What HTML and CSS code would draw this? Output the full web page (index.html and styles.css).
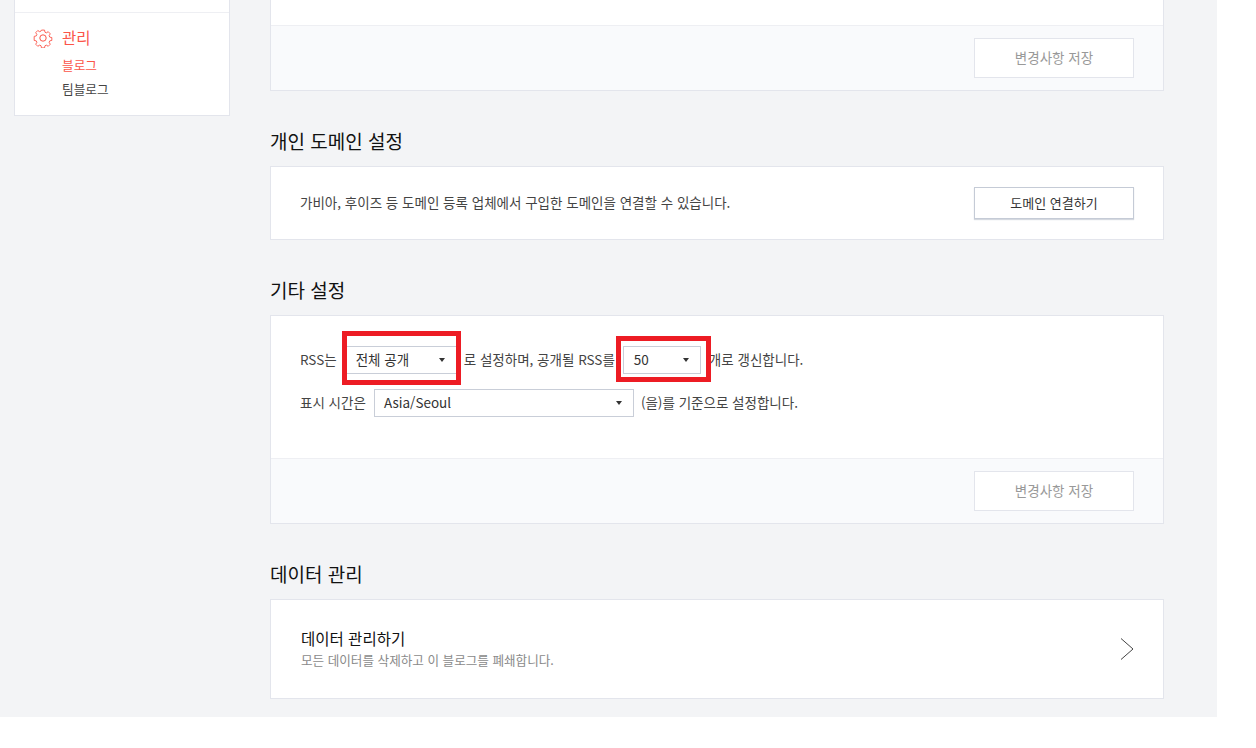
FILE: index.html
```html
<!DOCTYPE html>
<html lang="ko">
<head>
    <meta charset="UTF-8">
    <title>블로그 관리</title>
    <link rel="stylesheet" href="styles.css">
</head>
<body>
    <div class="page">
        <aside class="sidebar">
            <div class="side-top"></div>
            <div class="side-menu">
                <div class="side-title">
                    <svg class="gear" width="20" height="20" viewBox="0 0 20 20" fill="none" stroke="#fb5549" stroke-width="1">
                        <path d="M8.3 1.2h3.4l.5 2.4 1.5.7 2.1-1.3 2.3 2.4-1.3 2 .7 1.6 2.3.5v3.2l-2.3.5-.7 1.6 1.3 2.1-2.3 2.3-2.1-1.3-1.5.7-.5 2.4H8.3l-.5-2.4-1.5-.7-2.1 1.3-2.3-2.3 1.3-2.1-.7-1.6-2.3-.5V8.2l2.3-.5.7-1.6-1.3-2 2.3-2.4 2.1 1.3 1.5-.7z" transform="translate(1 1) scale(.9)" stroke-linejoin="round"/>
                        <circle cx="10" cy="10" r="3.2"/>
                    </svg>
                    <span>관리</span>
                </div>
                <a class="side-link active">블로그</a>
                <a class="side-link">팀블로그</a>
            </div>
        </aside>

        <main class="content">
            <section class="card first">
                <div class="card-body cut"></div>
                <div class="card-foot"><button class="btn off">변경사항 저장</button></div>
            </section>

            <h2>개인 도메인 설정</h2>
            <section class="card">
                <div class="domain-row">
                    <p>가비아, 후이즈 등 도메인 등록 업체에서 구입한 도메인을 연결할 수 있습니다.</p>
                    <button class="btn">도메인 연결하기</button>
                </div>
            </section>

            <h2>기타 설정</h2>
            <section class="card">
                <div class="card-body etc">
                    <div class="line">
                        <span>RSS는</span>
                        <div class="select s-open"><span>전체 공개</span><i class="caret"></i></div>
                        <span>로 설정하며, 공개될 RSS를</span>
                        <div class="select s-count"><span>50</span><i class="caret"></i></div>
                        <span>개로 갱신합니다.</span>
                        <div class="mark mark-a"></div>
                        <div class="mark mark-b"></div>
                    </div>
                    <div class="line">
                        <span>표시 시간은</span>
                        <div class="select s-zone"><span>Asia/Seoul</span><i class="caret"></i></div>
                        <span>(을)를 기준으로 설정합니다.</span>
                    </div>
                </div>
                <div class="card-foot"><button class="btn off">변경사항 저장</button></div>
            </section>

            <h2>데이터 관리</h2>
            <section class="card">
                <div class="data-row">
                    <div>
                        <strong>데이터 관리하기</strong>
                        <p>모든 데이터를 삭제하고 이 블로그를 폐쇄합니다.</p>
                    </div>
                    <svg width="16" height="24" viewBox="0 0 16 24" fill="none" stroke="#444" stroke-width="1"><path d="M2 1.5L14 12 2 22.5"/></svg>
                </div>
            </section>
        </main>
    </div>
</body>
</html>
```

FILE: styles.css
```css
* {
    box-sizing: border-box;
}
html, body {
    margin: 0;
    height: 748px;
    overflow: hidden;
    background: #fff;
}
body {
    font-family: "Noto Sans CJK KR", "Noto Sans", sans-serif;
    font-size: 13.5px;
    color: #333;
}
.page {
    width: 1217px;
    height: 717px;
    background: #f3f4f6;
    display: flex;
    align-items: flex-start;
    padding-left: 14px;
}
.sidebar {
    width: 216px;
    height: 116px;
    background: #fff;
    border: 1px solid #e3e5ec;
    border-top: 0;
}
.side-top {
    height: 13px;
    border-bottom: 1px solid #eeeff3;
}
.side-menu {
    padding: 13px 0 0 18px;
}
.side-title {
    display: flex;
    align-items: center;
    gap: 9px;
    height: 22px;
    font-size: 15.5px;
    color: #fb5549;
    margin-bottom: 5px;
}
.gear {
    margin-top: 1px;
}
.side-link {
    display: block;
    margin-left: 29px;
    height: 24px;
    line-height: 24px;
    font-size: 12.7px;
    color: #444;
}
.side-link.active {
    color: #fb5549;
}
.content {
    width: 894px;
    margin-left: 40px;
}
h2 {
    margin: 0;
    height: 75px;
    padding-top: 35px;
    font-size: 19px;
    font-weight: 400;
    line-height: 30px;
    color: #111;
}
.card {
    background: #fff;
    border: 1px solid #e3e5ec;
}
.card.first {
    border-top: 0;
}
.card-body.cut {
    height: 25px;
}
.card-foot {
    height: 65px;
    background: #f9fafc;
    border-top: 1px solid #eeeff3;
    display: flex;
    justify-content: flex-end;
    padding: 12px 29px 0 0;
}
.btn {
    width: 160px;
    height: 40px;
    padding: 0 0 2px;
    background: #fff;
    border: 1px solid #e3e5ec;
    font: inherit;
    color: #999;
}
.domain-row {
    height: 72px;
    display: flex;
    align-items: center;
    justify-content: space-between;
    padding: 0 29px;
}
.domain-row p {
    margin: 0 0 2px;
    color: #444;
}
.domain-row .btn {
    height: 32px;
    border-color: #c5cbd6;
    box-shadow: 0 1px 1px #d5d9e0;
    font-size: 13px;
    color: #333;
}
.etc {
    height: 142px;
    padding: 30px 29px 0;
}
.line {
    position: relative;
    display: flex;
    align-items: center;
    height: 28px;
    margin-bottom: 15px;
    color: #444;
}
.line > span,
.select > span {
    padding-bottom: 2px;
}
.select {
    display: flex;
    align-items: center;
    justify-content: space-between;
    height: 28px;
    background: #fff;
    border: 1px solid #c9ced8;
    padding: 0 11px 0 9px;
    color: #333;
}
.caret {
    width: 0;
    height: 0;
    border: 3.5px solid transparent;
    border-top: 4px solid #333;
    border-bottom: 0;
}
.s-open {
    width: 111px;
    margin: 0 7px 0 9px;
}
.s-count {
    width: 78px;
    margin: 0 8px;
    padding-left: 10px;
}
.s-zone {
    width: 260px;
    margin: 0 7px 0 8px;
}
.mark {
    position: absolute;
    border: 5px solid #ed1c24;
}
.mark-a {
    left: 42px;
    top: -15px;
    width: 119px;
    height: 54px;
}
.mark-b {
    left: 316px;
    top: -10px;
    width: 95px;
    height: 46px;
}
.data-row {
    height: 98px;
    display: flex;
    align-items: center;
    justify-content: space-between;
    padding: 0 28px 0 30px;
}
.data-row strong {
    display: block;
    font-size: 15.5px;
    font-weight: 400;
    line-height: 20px;
    margin-bottom: 2px;
    color: #111;
}
.data-row p {
    margin: 0;
    font-size: 12.6px;
    line-height: 20px;
    color: #8a8a8a;
}
```
